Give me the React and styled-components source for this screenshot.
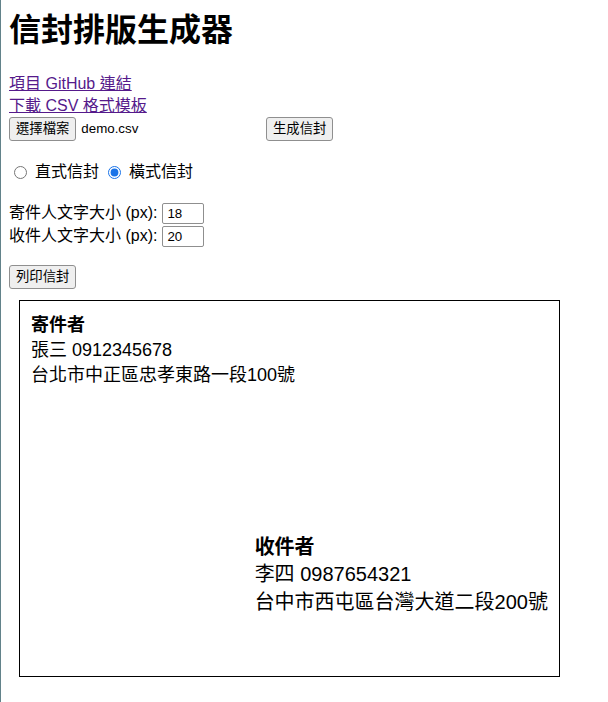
import React, { useState } from 'react';
import styled, { createGlobalStyle } from 'styled-components';

const GlobalStyle = createGlobalStyle`
  html {
    border-left: 1px solid #62828a;
    min-height: 100%;
  }
  body {
    margin: 8px;
    font-family: "Liberation Sans", "Noto Sans CJK TC", sans-serif;
    font-size: 16px;
    line-height: 1.4;
    color: #000;
    background: #fff;
  }
`;

const Title = styled.h1`
  margin: 0 0 21px;
  font-size: 32px;
  font-weight: bold;
  line-height: 44px;
`;

const LinkList = styled.div`
  display: flex;
  flex-direction: column;
  align-items: flex-start;
`;

const Link = styled.a`
  color: #551a8b;
  text-decoration: underline;
  line-height: 22px;
`;

const Toolbar = styled.div`
  display: flex;
  align-items: center;
  gap: 4px;
`;

const Button = styled.button`
  display: inline-flex;
  align-items: center;
  box-sizing: border-box;
  font-family: "Liberation Sans", "Noto Sans CJK TC", sans-serif;
  font-size: 13.33px;
  line-height: 18px;
  height: 24px;
  padding: 1px 6px;
  border: 1px solid #8f8f8f;
  border-radius: 3px;
  background: #efefef;
  color: #000;
  cursor: pointer;
`;

const FilePicker = styled.label`
  display: flex;
  align-items: center;
  width: 253px;
  font-size: 13.33px;
`;

const FileName = styled.span`
  margin-left: 5px;
`;

const OptionRow = styled.div`
  display: flex;
  align-items: center;
  margin: 20px 0 19px;
  height: 22px;
`;

const RadioLabel = styled.label`
  display: flex;
  align-items: center;
  margin-right: 4px;
`;

const Radio = styled.input`
  width: 13px;
  height: 13px;
  margin: 0 8px 0 5px;
  accent-color: #1a73e8;
`;

const SizeFields = styled.div`
  display: flex;
  flex-direction: column;
  margin-bottom: 17px;
`;

const FieldRow = styled.label`
  display: flex;
  align-items: center;
  height: 23px;
  gap: 5px;
`;

const NumberInput = styled.input`
  box-sizing: border-box;
  width: 42px;
  height: 21px;
  padding: 1px 4px;
  border: 1px solid #8f8f8f;
  border-radius: 2px;
  font-family: "Liberation Sans", sans-serif;
  font-size: 13.33px;
`;

const Envelope = styled.div`
  box-sizing: border-box;
  width: 541px;
  height: 377px;
  margin: 11px 0 0 10px;
  padding: 12px 11px 10px;
  border: 1px solid #000;
  display: flex;
  flex-direction: column;
  align-items: flex-start;
`;

const Party = styled.div`
  font-size: ${(p) => p.$size}px;
  line-height: ${(p) => (p.$recipient ? 1.37 : 1.4)};
  ${(p) => p.$recipient && 'align-self: flex-end; margin-top: auto; margin-bottom: 50px;'}
`;

const PartyTitle = styled.div`
  font-weight: bold;
`;

export default function App() {
  const [orientation, setOrientation] = useState('landscape');
  const [senderSize, setSenderSize] = useState(18);
  const [receiverSize, setReceiverSize] = useState(20);

  return (
    <>
      <GlobalStyle />
      <Title>信封排版生成器</Title>
      <LinkList>
        <Link href="#">項目 GitHub 連結</Link>
        <Link href="#">下載 CSV 格式模板</Link>
      </LinkList>
      <Toolbar>
        <FilePicker>
          <Button as="span">選擇檔案</Button>
          <FileName>demo.csv</FileName>
        </FilePicker>
        <Button>生成信封</Button>
      </Toolbar>
      <OptionRow>
        <RadioLabel>
          <Radio
            type="radio"
            name="orientation"
            checked={orientation === 'portrait'}
            onChange={() => setOrientation('portrait')}
          />
          直式信封
        </RadioLabel>
        <RadioLabel>
          <Radio
            type="radio"
            name="orientation"
            checked={orientation === 'landscape'}
            onChange={() => setOrientation('landscape')}
          />
          橫式信封
        </RadioLabel>
      </OptionRow>
      <SizeFields>
        <FieldRow>
          寄件人文字大小 (px):
          <NumberInput type="text" value={senderSize} onChange={(e) => setSenderSize(e.target.value)} />
        </FieldRow>
        <FieldRow>
          收件人文字大小 (px):
          <NumberInput type="text" value={receiverSize} onChange={(e) => setReceiverSize(e.target.value)} />
        </FieldRow>
      </SizeFields>
      <Button>列印信封</Button>
      <Envelope>
        <Party $size={senderSize}>
          <PartyTitle>寄件者</PartyTitle>
          <div>張三 0912345678</div>
          <div>台北市中正區忠孝東路一段100號</div>
        </Party>
        <Party $size={receiverSize} $recipient>
          <PartyTitle>收件者</PartyTitle>
          <div>李四 0987654321</div>
          <div>台中市西屯區台灣大道二段200號</div>
        </Party>
      </Envelope>
    </>
  );
}
